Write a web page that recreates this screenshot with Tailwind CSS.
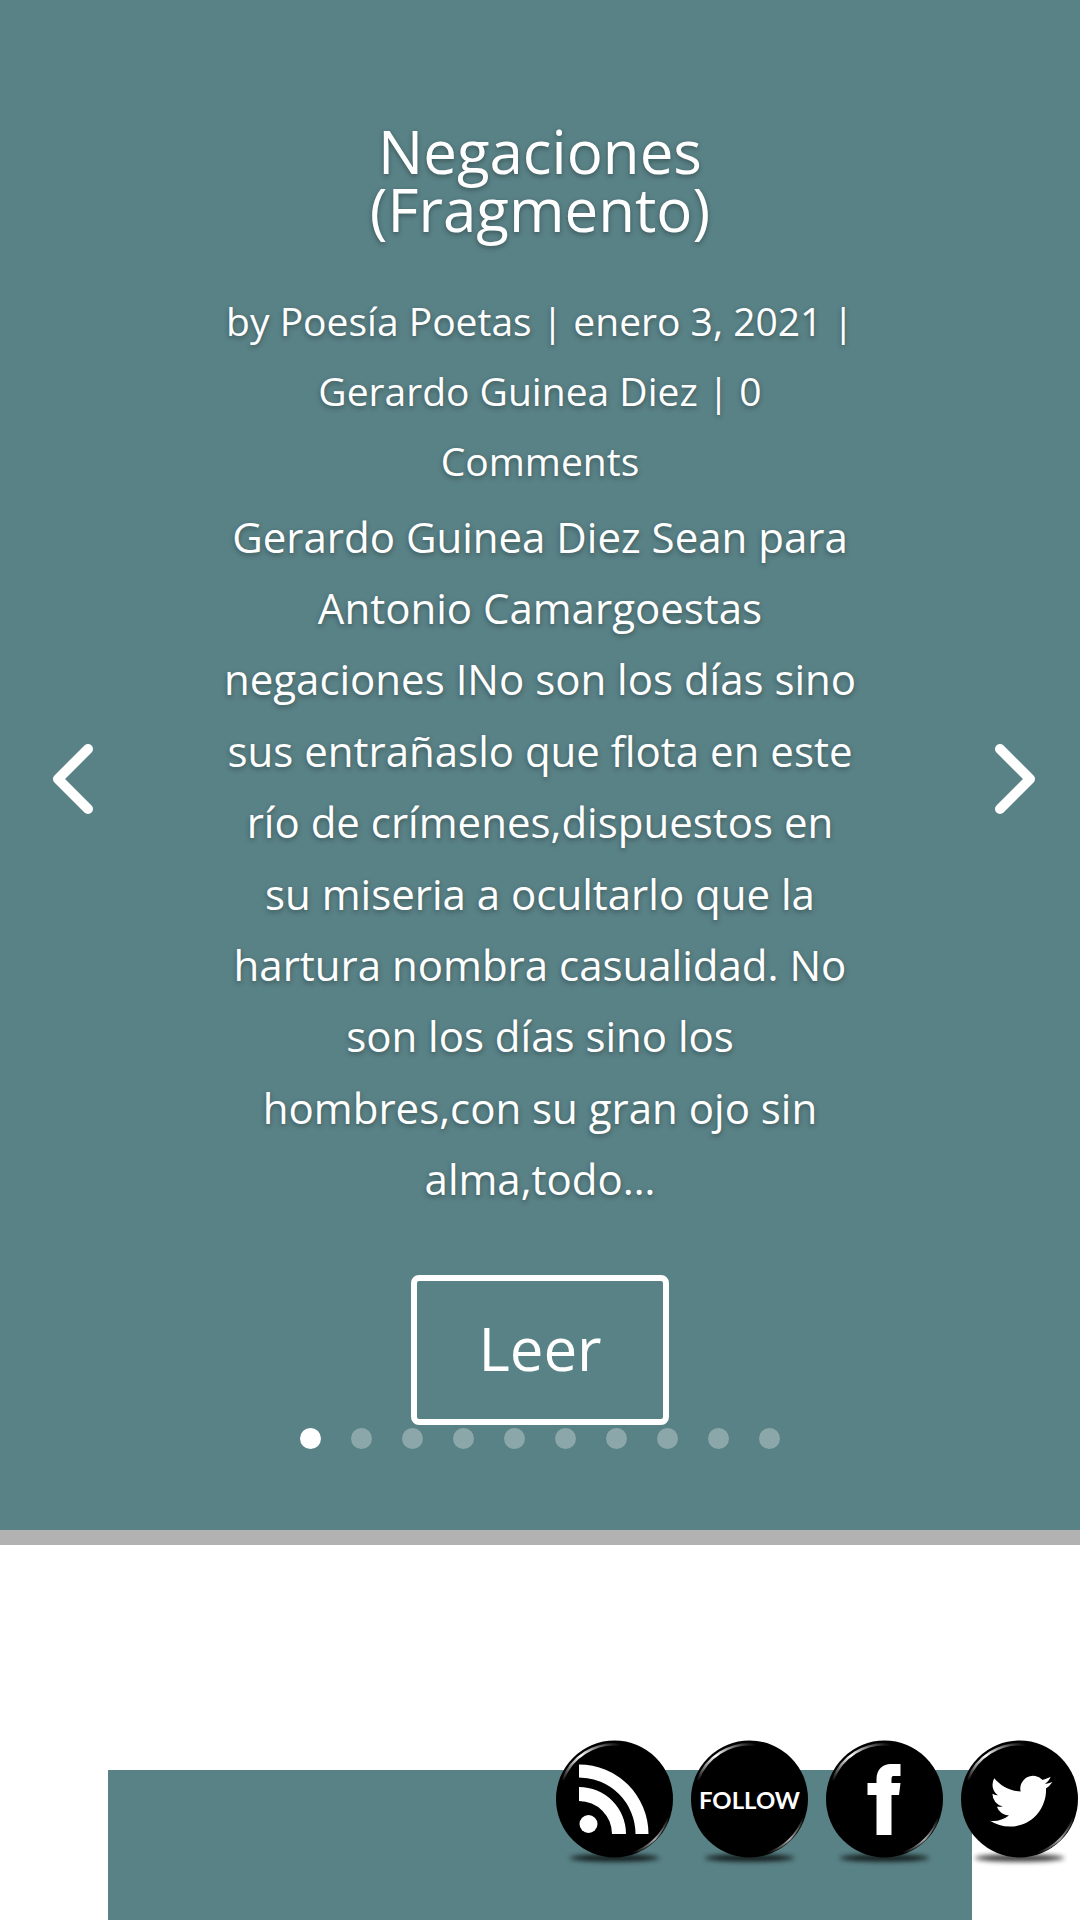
<!DOCTYPE html>
<html lang="es">
<head>
<meta charset="utf-8">
<title>Negaciones</title>
<script src="https://cdn.jsdelivr.net/npm/@tailwindcss/browser@4"></script>
</head>
<body class="bg-white font-['Open_Sans',sans-serif] text-white">
<div class="relative w-[1080px] h-[1920px] overflow-hidden">
  <section class="relative h-[1545px] bg-[#598286] border-b-[15px] border-[#b2b2b2] flex flex-col items-center pt-[122px]">
    <div class="w-[636px] flex flex-col items-center text-center [text-shadow:0_2px_5px_rgba(0,0,0,0.35)]">
      <h2 class="text-[60px] leading-[58px] font-normal">Negaciones<br>(Fragmento)</h2>
      <p class="mt-[48px] mb-[4px] text-[39px] leading-[70.2px]">by Poesía Poetas | enero 3, 2021 | Gerardo Guinea Diez | 0 Comments</p>
      <p class="text-[42px] leading-[71.4px]">Gerardo Guinea Diez Sean para Antonio Camargoestas negaciones INo son los días sino sus entrañaslo que flota en este río de crímenes,dispuestos en su miseria a ocultarlo que la hartura nombra casualidad. No son los días sino los hombres,con su gran ojo sin alma,todo…</p>
      <a class="mt-[60px] w-[258px] h-[150px] flex items-center justify-center border-[6px] border-white rounded-[8px] pb-[3px] text-[60px] [text-shadow:none]">Leer</a>
    </div>

    <svg class="absolute left-[49px] top-[740px]" width="50" height="78" viewBox="0 0 50 78" fill="none"><polyline points="39,9 9,39 39,69" stroke="#fff" stroke-width="10" stroke-linecap="round" stroke-linejoin="round"/></svg>
    <svg class="absolute left-[989px] top-[740px]" width="50" height="78" viewBox="0 0 50 78" fill="none"><polyline points="11,9 41,39 11,69" stroke="#fff" stroke-width="10" stroke-linecap="round" stroke-linejoin="round"/></svg>

    <div class="absolute left-[300px] top-[1428px] flex gap-[30px]">
      <span class="size-[21px] rounded-full bg-white"></span>
      <span class="size-[21px] rounded-full bg-white/30"></span>
      <span class="size-[21px] rounded-full bg-white/30"></span>
      <span class="size-[21px] rounded-full bg-white/30"></span>
      <span class="size-[21px] rounded-full bg-white/30"></span>
      <span class="size-[21px] rounded-full bg-white/30"></span>
      <span class="size-[21px] rounded-full bg-white/30"></span>
      <span class="size-[21px] rounded-full bg-white/30"></span>
      <span class="size-[21px] rounded-full bg-white/30"></span>
      <span class="size-[21px] rounded-full bg-white/30"></span>
    </div>
  </section>

  <div class="mt-[225px] mx-[108px] h-[150px] bg-[#598286]"></div>

  <div class="absolute left-[547px] top-[1731px] flex">
    <svg width="135" height="136" viewBox="-67.5 -68 135 136">
      <defs>
        <filter id="b1" x="-30%" y="-200%" width="160%" height="500%"><feGaussianBlur stdDeviation="2.5"/></filter>
        <linearGradient id="g1" x1="0" y1="1" x2="1" y2="0"><stop offset="0" stop-color="#fff" stop-opacity="0"/><stop offset=".5" stop-color="#fff"/><stop offset="1" stop-color="#fff" stop-opacity="0"/></linearGradient>
        <linearGradient id="g2" x1="1" y1="0" x2="0" y2="1"><stop offset="0" stop-color="#aaa" stop-opacity="0"/><stop offset=".5" stop-color="#aaa"/><stop offset="1" stop-color="#aaa" stop-opacity="0"/></linearGradient>
      </defs>
      <ellipse cx="0" cy="59" rx="45" ry="3.5" fill="#000" opacity=".8" filter="url(#b1)"/>
      <circle r="58.5" fill="#000"/>
      <path d="M-52-18A55 55 0 0 1 6-54.500" fill="none" stroke="url(#g1)" stroke-width="2.5"/>
      <path d="M54 18A57 57 0 0 1 18 54" fill="none" stroke="url(#g2)" stroke-width="2"/>
      <circle cx="-26" cy="25" r="9" fill="#fff"/>
      <path d="M-35.500-34.500A69.500 69.500 0 0 1 34 35H21A56.500 56.500 0 0 0-35.500-21.500Z" fill="#fff"/>
      <path d="M-35.500-12A47 47 0 0 1 11.500 35H-2.500A33 33 0 0 0-35.500 2Z" fill="#fff"/>
    </svg>
    <svg width="135" height="136" viewBox="-67.500 -68 135 136">
      <ellipse cx="0" cy="59" rx="45" ry="3.5" fill="#000" opacity=".8" filter="url(#b1)"/>
      <circle r="58.500" fill="#000"/>
      <path d="M-52-18A55 55 0 0 1 6-54.500" fill="none" stroke="url(#g1)" stroke-width="2.500"/>
      <path d="M54 18A57 57 0 0 1 18 54" fill="none" stroke="url(#g2)" stroke-width="2"/>
      <text x="0" y="10" text-anchor="middle" fill="#fff" font-family="Lato, sans-serif" font-weight="700" font-size="22" textLength="101" lengthAdjust="spacingAndGlyphs">FOLLOW</text>
    </svg>
    <svg width="135" height="136" viewBox="-67.500 -68 135 136">
      <ellipse cx="0" cy="59" rx="45" ry="3.5" fill="#000" opacity=".8" filter="url(#b1)"/>
      <circle r="58.500" fill="#000"/>
      <path d="M-52-18A55 55 0 0 1 6-54.500" fill="none" stroke="url(#g1)" stroke-width="2.500"/>
      <path d="M54 18A57 57 0 0 1 18 54" fill="none" stroke="url(#g2)" stroke-width="2"/>
      <path d="M-8 36V-4H-17V-16H-8V-20C-8-30-1-35 6-35H16V-23H9C7-23 7-21 7-19V-16H16L14.500-4H7V36Z" fill="#fff"/>
    </svg>
    <svg width="135" height="136" viewBox="-67.500 -68 135 136">
      <ellipse cx="0" cy="59" rx="45" ry="3.5" fill="#000" opacity=".8" filter="url(#b1)"/>
      <circle r="58.500" fill="#000"/>
      <path d="M-52-18A55 55 0 0 1 6-54.500" fill="none" stroke="url(#g1)" stroke-width="2.500"/>
      <path d="M54 18A57 57 0 0 1 18 54" fill="none" stroke="url(#g2)" stroke-width="2"/>
      <g transform="translate(-29.500 -29) scale(2.6)"><path d="M23.953 4.57a10 10 0 01-2.825.775 4.958 4.958 0 002.163-2.723c-.951.555-2.005.959-3.127 1.184a4.92 4.92 0 00-8.384 4.482C7.69 8.095 4.067 6.13 1.64 3.162a4.822 4.822 0 00-.666 2.475c0 1.71.87 3.213 2.188 4.096a4.904 4.904 0 01-2.228-.616v.06a4.923 4.923 0 003.946 4.827 4.996 4.996 0 01-2.212.085 4.936 4.936 0 004.604 3.417 9.867 9.867 0 01-6.102 2.105c-.39 0-.779-.023-1.17-.067a13.995 13.995 0 007.557 2.209c9.053 0 13.998-7.496 13.998-13.985 0-.21 0-.42-.015-.63A9.935 9.935 0 0024 4.59z" fill="#fff"/></g>
    </svg>
  </div>
</div>
</body>
</html>
